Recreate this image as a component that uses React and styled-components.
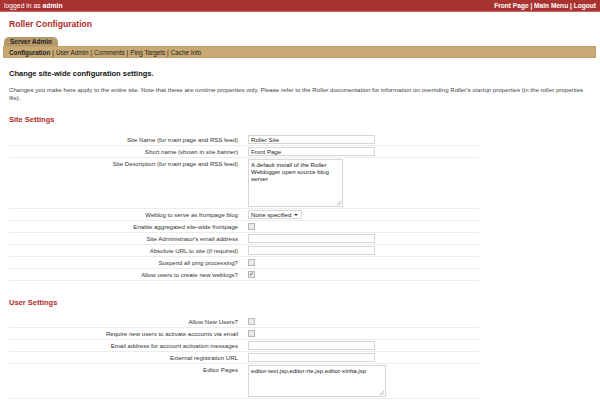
import React from "react";
import styled, { createGlobalStyle } from "styled-components";

const Global = createGlobalStyle`
  html, body { margin: 0; padding: 0; background: #fff; }
  body {
    font-family: "Liberation Sans", Arial, sans-serif;
    font-size: 7px;
    color: #333;
    width: 600px;
    height: 400px;
    overflow: hidden;
  }
`;

const TopBar = styled.div`
  height: 11px;
  background: #a93331;
  border-bottom: 1px solid #c96a68;
  color: #fff;
  display: flex;
  justify-content: space-between;
  align-items: center;
  padding: 0 4px;
  font-size: 6.8px;
  b { font-weight: bold; }
`;

const TopLinks = styled.div`
  font-weight: bold;
  font-size: 6.6px;
`;

const Title = styled.h1`
  margin: 7px 0 0 9px;
  font-size: 8.6px;
  line-height: 11px;
  color: #b02a2a;
  font-weight: bold;
`;

const TabRow = styled.div`
  margin: 7px 0 0 4px;
  display: flex;
`;

const Tab = styled.div`
  background: #b79a6a;
  border-radius: 5px 5px 0 0;
  padding: 0 6px;
  height: 9px;
  line-height: 10px;
  font-size: 6.5px;
  font-weight: bold;
  color: #222;
`;

const NavBar = styled.div`
  margin: 0 4px 0 3px;
  height: 10px;
  background: #c8a974;
  border: 1px solid #bfa06b;
  display: flex;
  align-items: center;
  padding-left: 5px;
  font-size: 6.3px;
  color: #222;
  span { margin: 0 2px; }
  b { font-weight: bold; }
`;

const Content = styled.div`
  padding: 0 9px;
`;

const Heading = styled.h2`
  margin: 11px 0 0;
  font-size: 7.5px;
  line-height: 10px;
  color: #111;
  font-weight: bold;
`;

const Intro = styled.p`
  margin: 7px 0 0;
  font-size: 6.15px;
  line-height: 8px;
  color: #444;
`;

const SectionTitle = styled.h3`
  margin: ${(p) => p.$top}px 0 0;
  font-size: 7.5px;
  line-height: 10px;
  color: #b02a2a;
  font-weight: bold;
`;

const Form = styled.div`
  width: 470px;
  margin-top: ${(p) => p.$top}px;
`;

const Row = styled.div`
  display: grid;
  grid-template-columns: 229px 1fr;
  column-gap: 10px;
  padding: 1px 0;
  min-height: 9px;
  border-bottom: 1px solid #ececec;
`;

const Label = styled.div`
  text-align: right;
  line-height: 9px;
  font-size: 6.1px;
  color: #333;
`;

const Field = styled.div`
  display: flex;
  align-items: flex-start;
`;

const Input = styled.div`
  width: 122px;
  height: 7px;
  border: 1px solid #d6d6d6;
  font-size: 6.1px;
  line-height: 7px;
  padding: 0 1px 0 2px;
  color: #222;
  background: #fff;
`;

const Area = styled.div`
  position: relative;
  width: ${(p) => p.$w}px;
  height: ${(p) => p.$h}px;
  border: 1px solid #d6d6d6;
  font-size: 6.1px;
  line-height: 7px;
  padding: 1px 2px;
  color: #222;
  &::after {
    content: "";
    position: absolute;
    right: 1px;
    bottom: 1px;
    width: 4px;
    height: 4px;
    background: linear-gradient(135deg, transparent 50%, #bbb 50%, transparent 65%, #bbb 80%, transparent 90%);
  }
`;

const Select = styled.div`
  display: flex;
  align-items: center;
  gap: 3px;
  height: 7px;
  border: 1px solid #d6d6d6;
  border-radius: 1px;
  padding: 0 3px 0 2px;
  font-size: 6.1px;
  color: #222;
  &::after {
    content: "";
    border-left: 2px solid transparent;
    border-right: 2px solid transparent;
    border-top: 2px solid #333;
  }
`;

const Check = styled.div`
  width: 5px;
  height: 5px;
  margin-top: 1px;
  border: 1px solid #b7b7b7;
  background: #ebebeb;
  font-size: 6px;
  line-height: 5px;
  text-align: center;
  color: #334;
`;

const siteRows = [
  ["Site Name (for main page and RSS feed)", { t: "input", v: "Roller Site" }],
  ["Short name (shown in site banner)", { t: "input", v: "Front Page" }],
  [
    "Site Description (for main page and RSS feed)",
    { t: "area", v: "A default install of the Roller Weblogger open source blog server", w: 89, h: 44 },
  ],
  ["Weblog to serve as frontpage blog", { t: "select", v: "None specified" }],
  ["Enable aggregated site-wide frontpage", { t: "check" }],
  ["Site Administrator's email address", { t: "input", v: "" }],
  ["Absolute URL to site (if required)", { t: "input", v: "" }],
  ["Suspend all ping processing?", { t: "check" }],
  ["Allow users to create new weblogs?", { t: "check", on: true }],
];

const userRows = [
  ["Allow New Users?", { t: "check" }],
  ["Require new users to activate accounts via email", { t: "check" }],
  ["Email address for account activation messages", { t: "input", v: "" }],
  ["External registration URL", { t: "input", v: "" }],
  [
    "Editor Pages",
    { t: "area", v: "editor-text.jsp,editor-rte.jsp,editor-xinha.jsp", w: 132, h: 28 },
  ],
];

const renderField = (f) => {
  if (f.t === "input") return <Input>{f.v}</Input>;
  if (f.t === "area")
    return (
      <Area $w={f.w} $h={f.h}>
        {f.v}
      </Area>
    );
  if (f.t === "select") return <Select>{f.v}</Select>;
  return <Check>{f.on ? "✓" : ""}</Check>;
};

const FormRows = ({ rows }) =>
  rows.map(([label, field]) => (
    <Row key={label}>
      <Label>{label}</Label>
      <Field>{renderField(field)}</Field>
    </Row>
  ));

export default function App() {
  return (
    <>
      <Global />
      <TopBar>
        <div>
          logged in as <b>admin</b>
        </div>
        <TopLinks>Front Page | Main Menu | Logout</TopLinks>
      </TopBar>
      <Title>Roller Configuration</Title>
      <TabRow>
        <Tab>Server Admin</Tab>
      </TabRow>
      <NavBar>
        <b>Configuration</b>
        <span>|</span>User Admin<span>|</span>Comments<span>|</span>Ping Targets
        <span>|</span>Cache Info
      </NavBar>
      <Content>
        <Heading>Change site-wide configuration settings.</Heading>
        <Intro>
          Changes you make here apply to the entire site. Note that these are <i>runtime</i>{" "}
          properties only. Please refer to the Roller documentation for information on
          overriding Roller's <i>startup</i> properties (in the roller properties file).
        </Intro>
        <SectionTitle $top={13}>Site Settings</SectionTitle>
        <Form $top={9}>
          <FormRows rows={siteRows} />
        </Form>
        <SectionTitle $top={17}>User Settings</SectionTitle>
        <Form $top={8}>
          <FormRows rows={userRows} />
        </Form>
      </Content>
    </>
  );
}
